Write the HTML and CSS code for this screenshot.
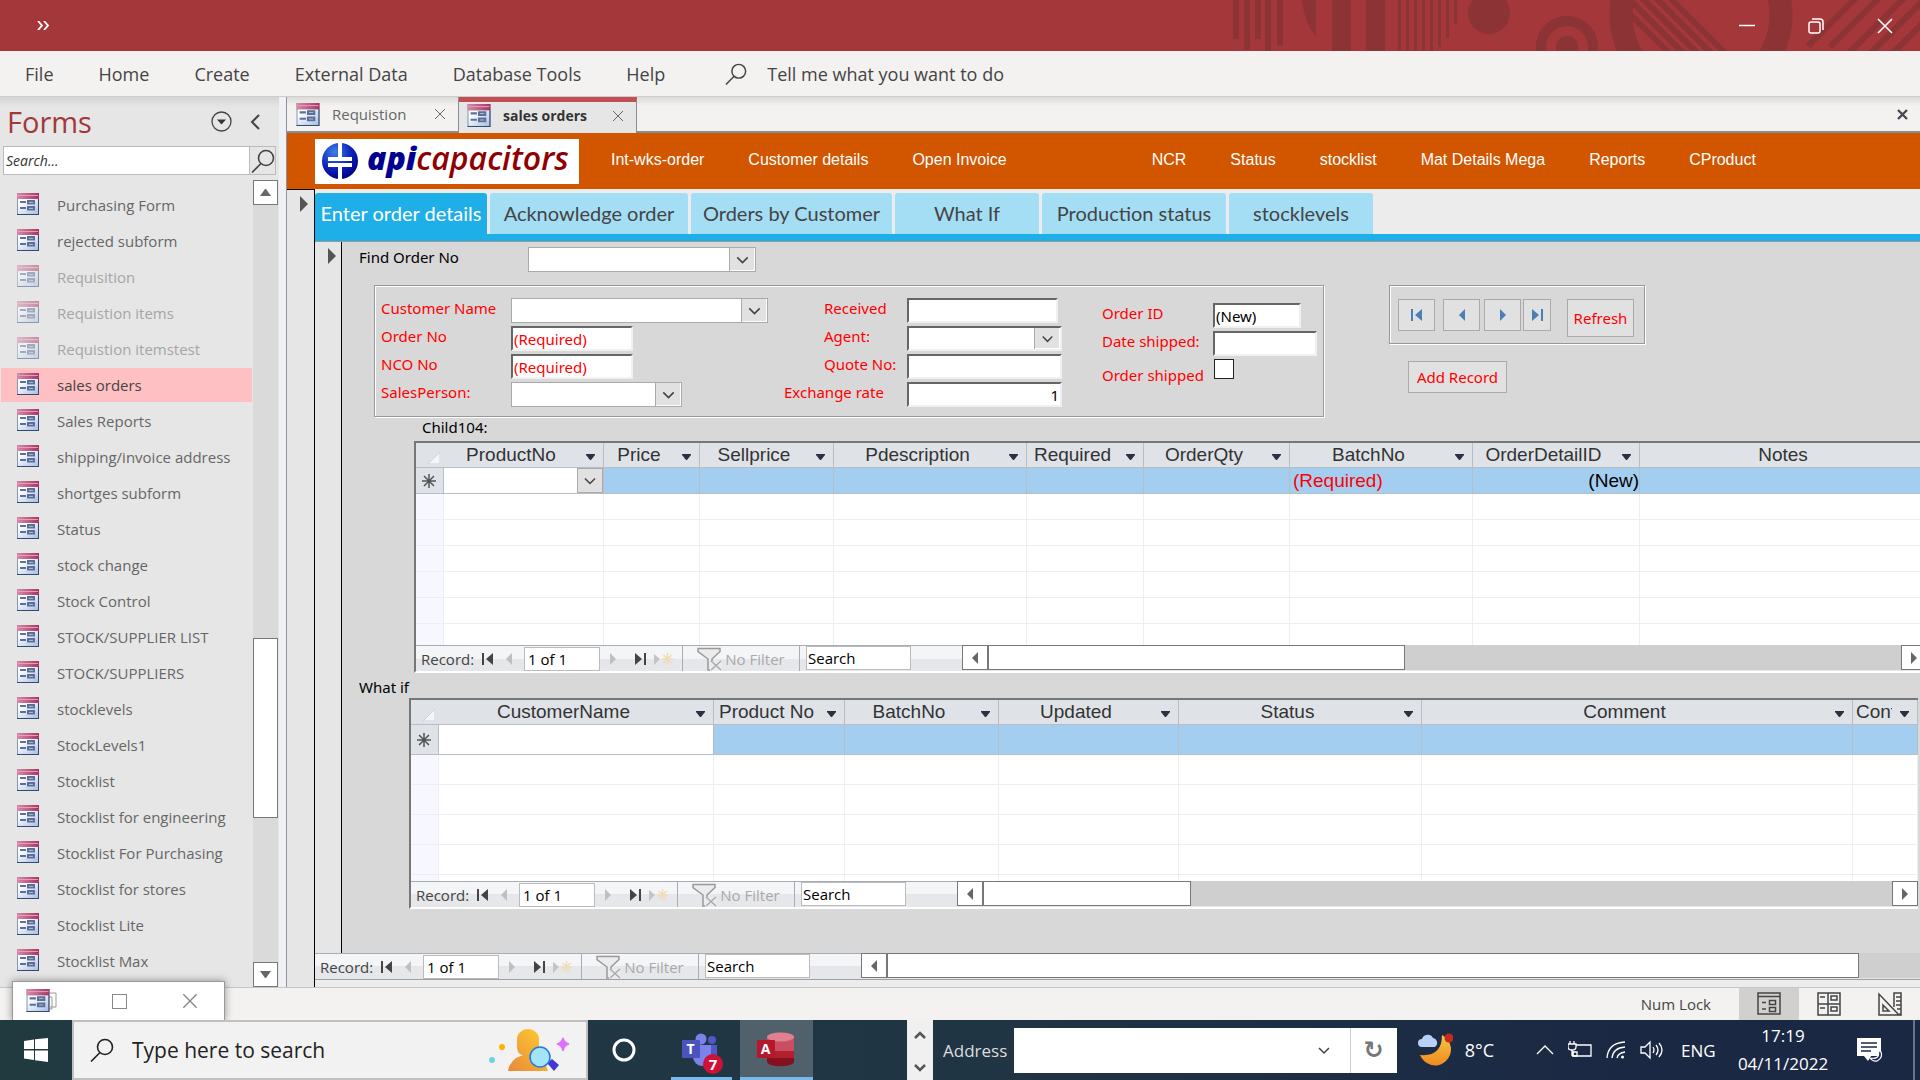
FILE: index.html
```html
<!DOCTYPE html>
<html lang="en">
<head>
  <meta charset="UTF-8">
  <meta name="viewport" content="width=device-width, initial-scale=1.0">
  <title>sales orders</title>
  <link rel="stylesheet" href="styles.css">
</head>
<body>
  <!-- Shared icons -->
  <svg class="defs" aria-hidden="true">
    <defs>
      <linearGradient id="g-head" x1="0" y1="0" x2="1" y2="0"><stop offset="0" stop-color="#d889a8"/><stop offset="1" stop-color="#a83464"/></linearGradient>
      <linearGradient id="g-body" x1="0" y1="0" x2="1" y2="1"><stop offset="0.2" stop-color="#fff"/><stop offset="1" stop-color="#a9bfe6"/></linearGradient>
      <symbol id="form" viewBox="0 0 22 22">
        <rect width="22" height="22" fill="#8496b4"/>
        <rect x="1" y="6" width="20" height="15" fill="url(#g-body)"/>
        <rect width="22" height="6" fill="url(#g-head)"/>
        <path d="M1 2.500h20" stroke="#e0a0bb"/>
        <path d="M21.500 6v16M0 21.500h22" stroke="#364a6c"/>
        <path d="M3 9h6M3 15h6" stroke="#5b7099" stroke-width="2"/>
        <path d="M11 8h6v2.500h-6zM11 14h6v2.500h-6z" fill="#fff" stroke="#5b7099" stroke-width="2"/>
      </symbol>
      <symbol id="chev" viewBox="0 0 24 22"><path d="M7 9l5 5 5-5" fill="none" stroke="#444" stroke-width="1.500"/></symbol>
      <symbol id="close" viewBox="0 0 12 12"><path d="M1 1l10 10M11 1L1 11" fill="none" stroke="currentColor"/></symbol>
      <symbol id="glass" viewBox="0 0 24 24"><circle cx="15" cy="9" r="7.500" fill="none" stroke="currentColor" stroke-width="1.600"/><path d="M10 14.500L1 23.500" stroke="currentColor" stroke-width="1.600"/></symbol>
      <symbol id="left" viewBox="0 0 6 12"><path d="M6 0v12L0 6z" fill="currentColor"/></symbol>
      <symbol id="right" viewBox="0 0 6 12"><path d="M0 0v12l6-6z" fill="currentColor"/></symbol>
      <symbol id="first" viewBox="0 0 12 12"><path d="M0 0h2v12H0zM11 0v12L4 6z" fill="currentColor"/></symbol>
      <symbol id="last" viewBox="0 0 12 12"><path d="M12 0h-2v12h2zM1 0v12l7-6z" fill="currentColor"/></symbol>
      <symbol id="new" viewBox="0 0 20 12"><path d="M0 1v11l6-6z" fill="#c4c4c4"/><path d="M13.500 0v12M8 6h11M9.500 2l8 8M17.500 2l-8 8" stroke="#f0dcb8" stroke-width="1.500"/></symbol>
      <symbol id="funnel" viewBox="0 0 25 24"><path d="M1 1.500h22v3L15 12v11h-4V12L1 4.500z" fill="#ececec" stroke="#999" stroke-width="1.500"/><path d="M13 14h12v10H13z" fill="#ebecef"/><path d="M14 14l10 9M24 14l-10 9" stroke="#aaa" stroke-width="1.500"/></symbol>
      <symbol id="drop" viewBox="0 0 9 6"><path d="M0 0h9v1L5 6H4L0 1z" fill="#2b3140"/></symbol>
      <symbol id="star" viewBox="0 0 16 16"><path d="M8 1v14M1 8h14M3 3l10 10M13 3L3 13" stroke="#555" stroke-width="1.500"/></symbol>
      <symbol id="corner" viewBox="0 0 12 12"><path d="M12 0v12H0z" fill="#f3f5f8" stroke="#c8d4e4"/></symbol>
    </defs>
  </svg>

  <header class="titlebar">
    <svg class="pattern" viewBox="0 0 720 51" aria-hidden="true">
      <defs><clipPath id="ring"><circle cx="501" cy="15" r="75"/></clipPath></defs>
      <g fill="#8b3335">
        <path d="M33 0h6v39h-6zM44 0h6v50h-6zM55 0h6v39h-6zM65 0h6v51h-6zM77 0h6v46h-6zM132 0h19v51h-19zM166 0h19v51h-19z"/>
        <path d="M102 0h14v37Q104 22 102 0z"/>
        <path d="M198 0h3v51h-3zM206 0h3v51h-3zM214 0h3v51h-3zM222 0h3v51h-3zM230 0h3v51h-3zM238 0h3v47h-3zM246 0h3v38h-3zM254 0h3v24h-3z"/>
        <circle cx="289" cy="13" r="21"/>
        <circle cx="367" cy="47" r="11"/>
      </g>
      <g fill="none" stroke="#8b3335">
        <circle cx="367" cy="47" r="26" stroke-width="10"/>
        <circle cx="501" cy="15" r="80" stroke-width="23"/>
        <path clip-path="url(#ring)" d="M400-16l80 80M414-16l80 80M428-16l80 80M442-16l80 80M456-16l80 80" stroke-width="6"/>
        <path d="M608 46L656-2M630 47L679-2M642 60l62-62M664 60l62-62M686 60l62-62" stroke-width="6"/>
      </g>
    </svg>
    <button class="qat" aria-label="More commands"><svg width="13" height="9" viewBox="0 0 13 9"><path d="M1 0l4 4.500L1 9M7 0l4 4.500L7 9" fill="none" stroke="#fff" stroke-width="1.800"/></svg></button>
    <div class="winbtns">
      <button aria-label="Minimize"><svg width="16" height="16" viewBox="0 0 16 16"><path d="M0 7.500h16" stroke="#fff" stroke-width="1.500"/></svg></button>
      <button aria-label="Restore"><svg width="16" height="16" viewBox="0 0 16 16"><rect x="1" y="4" width="11" height="11" rx="2" fill="none" stroke="#fff" stroke-width="1.500"/><path d="M4 1h8a3 3 0 0 1 3 3v8" fill="none" stroke="#fff" stroke-width="1.500"/></svg></button>
      <button aria-label="Close"><svg width="16" height="16" viewBox="0 0 16 16"><path d="M1 1l14 14M15 1L1 15" stroke="#fff" stroke-width="1.500"/></svg></button>
    </div>
  </header>

  <nav class="ribbon">
    <a href="#">File</a>
    <a href="#">Home</a>
    <a href="#">Create</a>
    <a href="#">External Data</a>
    <a href="#">Database Tools</a>
    <a href="#">Help</a>
    <label class="tellme"><svg width="22" height="22"><use href="#glass"/></svg><input type="text" value="Tell me what you want to do"></label>
  </nav>

  <div class="workspace">
    <aside class="sidebar">
      <div class="side-head">
        <h1>Forms</h1>
        <button aria-label="Filter"><svg width="21" height="21" viewBox="0 0 21 21"><circle cx="10.500" cy="10.500" r="9.500" fill="none" stroke="#444" stroke-width="1.300"/><path d="M6 8.500h9l-4.500 5z" fill="#333"/></svg></button>
        <button aria-label="Collapse"><svg width="10" height="16" viewBox="0 0 10 16"><path d="M9 1L2 8l7 7" fill="none" stroke="#444" stroke-width="2"/></svg></button>
      </div>
      <div class="side-search">
        <input type="text" placeholder="Search..." aria-label="Search forms">
        <button aria-label="Search"><svg width="24" height="24"><use href="#glass"/></svg></button>
      </div>
      <div class="side-body">
        <ul class="side-list">
          <li><a href="#"><svg><use href="#form"/></svg>Purchasing Form</a></li>
          <li><a href="#"><svg><use href="#form"/></svg>rejected subform</a></li>
          <li class="dim"><a href="#"><svg><use href="#form"/></svg>Requisition</a></li>
          <li class="dim"><a href="#"><svg><use href="#form"/></svg>Requistion items</a></li>
          <li class="dim"><a href="#"><svg><use href="#form"/></svg>Requistion itemstest</a></li>
          <li class="selected"><a href="#"><svg><use href="#form"/></svg>sales orders</a></li>
          <li><a href="#"><svg><use href="#form"/></svg>Sales Reports</a></li>
          <li><a href="#"><svg><use href="#form"/></svg>shipping/invoice address</a></li>
          <li><a href="#"><svg><use href="#form"/></svg>shortges subform</a></li>
          <li><a href="#"><svg><use href="#form"/></svg>Status</a></li>
          <li><a href="#"><svg><use href="#form"/></svg>stock change</a></li>
          <li><a href="#"><svg><use href="#form"/></svg>Stock Control</a></li>
          <li><a href="#"><svg><use href="#form"/></svg>STOCK/SUPPLIER LIST</a></li>
          <li><a href="#"><svg><use href="#form"/></svg>STOCK/SUPPLIERS</a></li>
          <li><a href="#"><svg><use href="#form"/></svg>stocklevels</a></li>
          <li><a href="#"><svg><use href="#form"/></svg>StockLevels1</a></li>
          <li><a href="#"><svg><use href="#form"/></svg>Stocklist</a></li>
          <li><a href="#"><svg><use href="#form"/></svg>Stocklist for engineering</a></li>
          <li><a href="#"><svg><use href="#form"/></svg>Stocklist For Purchasing</a></li>
          <li><a href="#"><svg><use href="#form"/></svg>Stocklist for stores</a></li>
          <li><a href="#"><svg><use href="#form"/></svg>Stocklist Lite</a></li>
          <li><a href="#"><svg><use href="#form"/></svg>Stocklist Max</a></li>
        </ul>
        <div class="vscroll">
          <button aria-label="Scroll up"><svg width="11" height="7" viewBox="0 0 11 7"><path d="M0 7h11L6 0H5z" fill="#666"/></svg></button>
          <div class="vtrack"><div class="vthumb"></div></div>
          <button aria-label="Scroll down"><svg width="11" height="7" viewBox="0 0 11 7"><path d="M0 0h11L6 7H5z" fill="#666"/></svg></button>
        </div>
      </div>
    </aside>

    <main class="document">
      <div class="doc-tabs">
        <div class="doc-tab"><svg class="form-ico"><use href="#form"/></svg><span>Requistion</span><button aria-label="Close Requistion"><svg width="12" height="12"><use href="#close"/></svg></button></div>
        <div class="doc-tab current"><svg class="form-ico"><use href="#form"/></svg><span>sales orders</span><button aria-label="Close sales orders"><svg width="12" height="12"><use href="#close"/></svg></button></div>
        <button class="close-all" aria-label="Close"><svg width="11" height="11" viewBox="0 0 11 11"><path d="M1 1l9 9M10 1l-9 9" stroke="#444a50" stroke-width="2.400"/></svg></button>
      </div>

      <div class="banner">
        <div class="logo">
          <svg width="38" height="38" viewBox="0 0 38 38" aria-hidden="true">
            <defs><radialGradient id="g-ball" cx="0.35" cy="0.25" r="0.8"><stop offset="0" stop-color="#3f7fe8"/><stop offset="0.6" stop-color="#0a20b8"/><stop offset="1" stop-color="#000080"/></radialGradient></defs>
            <circle cx="19" cy="19" r="18" fill="url(#g-ball)"/>
            <path d="M17 1h4v14h10v4H7v-4h10zM7 21h24v4H21v12h-4V25H7z" fill="#fff"/>
          </svg>
          <span class="api">api</span><span class="cap">capacitors</span>
        </div>
        <nav class="banner-links">
          <a href="#">Int-wks-order</a>
          <a href="#">Customer details</a>
          <a href="#">Open Invoice</a>
          <a href="#">NCR</a>
          <a href="#">Status</a>
          <a href="#">stocklist</a>
          <a href="#">Mat Details Mega</a>
          <a href="#">Reports</a>
          <a href="#">CProduct</a>
        </nav>
      </div>

      <div class="record">
        <div class="selector outer"><svg width="8" height="16" viewBox="0 0 8 16"><path d="M0 0v16l8-8z" fill="#555"/></svg></div>
        <div class="record-main">
          <div class="tabs" role="tablist">
            <button class="tab active" role="tab">Enter order details</button>
            <button class="tab" role="tab">Acknowledge order</button>
            <button class="tab" role="tab">Orders by Customer</button>
            <button class="tab" role="tab">What If</button>
            <button class="tab" role="tab">Production status</button>
            <button class="tab" role="tab">stocklevels</button>
          </div>

          <div class="record inner-record">
            <div class="selector"><svg width="8" height="16" viewBox="0 0 8 16"><path d="M0 0v16l8-8z" fill="#555"/></svg></div>
            <form class="order-form">
              <div class="find">
                <label for="find-order">Find Order No</label>
                <div class="combo"><select id="find-order"><option></option></select><svg><use href="#chev"/></svg></div>
              </div>

              <div class="panels">
                <div class="group">
                  <div class="fields customer">
                    <label for="customer">Customer Name</label>
                    <div class="combo"><select id="customer"><option></option></select><svg><use href="#chev"/></svg></div>
                    <label for="order-no">Order No</label>
                    <input class="sunken required" id="order-no" type="text" value="(Required)">
                    <label for="nco-no">NCO No</label>
                    <input class="sunken required" id="nco-no" type="text" value="(Required)">
                    <label for="sales-person">SalesPerson:</label>
                    <div class="combo narrow"><select id="sales-person"><option></option></select><svg><use href="#chev"/></svg></div>
                  </div>
                  <div class="fields quote">
                    <label class="indent" for="received">Received</label>
                    <input class="sunken date" id="received" type="text">
                    <label class="indent" for="agent">Agent:</label>
                    <div class="combo sunken"><select id="agent"><option></option></select><svg><use href="#chev"/></svg></div>
                    <label class="indent" for="quote-no">Quote No:</label>
                    <input class="sunken" id="quote-no" type="text">
                    <label for="rate">Exchange rate</label>
                    <input class="sunken number" id="rate" type="text" value="1">
                  </div>
                  <div class="fields shipping">
                    <label for="order-id">Order ID</label>
                    <input class="sunken short" id="order-id" type="text" value="(New)">
                    <label for="date-shipped">Date shipped:</label>
                    <input class="sunken" id="date-shipped" type="text">
                    <label for="order-shipped">Order shipped</label>
                    <input class="check" id="order-shipped" type="checkbox">
                  </div>
                </div>
                <div class="actions">
                  <div class="nav-box">
                    <button type="button" aria-label="First record"><svg width="12" height="12"><use href="#first"/></svg></button>
                    <button type="button" aria-label="Previous record"><svg width="8" height="12"><use href="#left"/></svg></button>
                    <button type="button" aria-label="Next record"><svg width="8" height="12"><use href="#right"/></svg></button>
                    <button type="button" class="slim" aria-label="Last record"><svg width="12" height="12"><use href="#last"/></svg></button>
                    <button type="button" class="refresh">Refresh</button>
                  </div>
                  <button type="button" class="add">Add Record</button>
                </div>
              </div>

              <p class="sub-label child">Child104:</p>
              <section class="sheet items">
                <table>
                  <colgroup><col><col><col><col><col><col><col><col><col><col></colgroup>
                  <thead>
                    <tr>
                      <th><svg class="corner"><use href="#corner"/></svg></th>
                      <th><div><span>ProductNo</span><svg><use href="#drop"/></svg></div></th>
                      <th><div><span>Price</span><svg><use href="#drop"/></svg></div></th>
                      <th><div><span>Sellprice</span><svg><use href="#drop"/></svg></div></th>
                      <th><div><span>Pdescription</span><svg><use href="#drop"/></svg></div></th>
                      <th><div><span>Required</span><svg><use href="#drop"/></svg></div></th>
                      <th><div><span>OrderQty</span><svg><use href="#drop"/></svg></div></th>
                      <th><div><span>BatchNo</span><svg><use href="#drop"/></svg></div></th>
                      <th><div><span>OrderDetailID</span><svg><use href="#drop"/></svg></div></th>
                      <th>Notes</th>
                    </tr>
                  </thead>
                  <tbody>
                    <tr class="new-row">
                      <td><svg class="star"><use href="#star"/></svg></td>
                      <td><div class="combo cell"><select aria-label="ProductNo"><option></option></select><svg><use href="#chev"/></svg></div></td>
                      <td></td><td></td><td></td><td></td><td></td><td class="required">(Required)</td><td class="number">(New)</td><td></td>
                    </tr>
                    <tr><td></td><td></td><td></td><td></td><td></td><td></td><td></td><td></td><td></td><td></td></tr>
                    <tr><td></td><td></td><td></td><td></td><td></td><td></td><td></td><td></td><td></td><td></td></tr>
                    <tr><td></td><td></td><td></td><td></td><td></td><td></td><td></td><td></td><td></td><td></td></tr>
                    <tr><td></td><td></td><td></td><td></td><td></td><td></td><td></td><td></td><td></td><td></td></tr>
                    <tr><td></td><td></td><td></td><td></td><td></td><td></td><td></td><td></td><td></td><td></td></tr>
                    <tr class="partial"><td></td><td></td><td></td><td></td><td></td><td></td><td></td><td></td><td></td><td></td></tr>
                  </tbody>
                </table>
                <div class="navbar">
                  <div class="nav-part">
                    <span class="rec">Record:</span>
                    <button type="button" aria-label="First"><svg width="12" height="12"><use href="#first"/></svg></button>
                    <button type="button" aria-label="Previous" class="off"><svg width="6" height="12"><use href="#left"/></svg></button>
                    <input type="text" class="pos" value="1 of 1" aria-label="Current record">
                    <button type="button" aria-label="Next" class="off"><svg width="6" height="12"><use href="#right"/></svg></button>
                    <button type="button" aria-label="Last"><svg width="12" height="12"><use href="#last"/></svg></button>
                    <button type="button" aria-label="New"><svg width="20" height="12"><use href="#new"/></svg></button>
                  </div>
                  <button type="button" class="nofilter"><svg width="25" height="24"><use href="#funnel"/></svg>No Filter</button>
                  <div class="find-part"><input type="text" value="Search" aria-label="Search records"></div>
                  <div class="hscroll"><button type="button" aria-label="Scroll left"><svg width="6" height="12"><use href="#left"/></svg></button><div class="thumb"></div><div class="track"></div><button type="button" aria-label="Scroll right"><svg width="6" height="12"><use href="#right"/></svg></button></div>
                </div>
              </section>

              <p class="sub-label">What if</p>
              <section class="sheet whatif">
                <table>
                  <colgroup><col><col><col><col><col><col><col><col></colgroup>
                  <thead>
                    <tr>
                      <th><svg class="corner"><use href="#corner"/></svg></th>
                      <th><div><span>CustomerName</span><svg><use href="#drop"/></svg></div></th>
                      <th><div><span>Product No</span><svg><use href="#drop"/></svg></div></th>
                      <th><div><span>BatchNo</span><svg><use href="#drop"/></svg></div></th>
                      <th><div><span>Updated</span><svg><use href="#drop"/></svg></div></th>
                      <th><div><span>Status</span><svg><use href="#drop"/></svg></div></th>
                      <th><div><span>Comment</span><svg><use href="#drop"/></svg></div></th>
                      <th><div><span class="clip">Conf</span><svg><use href="#drop"/></svg></div></th>
                    </tr>
                  </thead>
                  <tbody>
                    <tr class="new-row"><td><svg class="star"><use href="#star"/></svg></td><td></td><td></td><td></td><td></td><td></td><td></td><td></td></tr>
                    <tr><td></td><td></td><td></td><td></td><td></td><td></td><td></td><td></td></tr>
                    <tr><td></td><td></td><td></td><td></td><td></td><td></td><td></td><td></td></tr>
                    <tr><td></td><td></td><td></td><td></td><td></td><td></td><td></td><td></td></tr>
                    <tr><td></td><td></td><td></td><td></td><td></td><td></td><td></td><td></td></tr>
                    <tr class="partial"><td></td><td></td><td></td><td></td><td></td><td></td><td></td><td></td></tr>
                  </tbody>
                </table>
                <div class="navbar">
                  <div class="nav-part">
                    <span class="rec">Record:</span>
                    <button type="button" aria-label="First"><svg width="12" height="12"><use href="#first"/></svg></button>
                    <button type="button" aria-label="Previous" class="off"><svg width="6" height="12"><use href="#left"/></svg></button>
                    <input type="text" class="pos" value="1 of 1" aria-label="Current record">
                    <button type="button" aria-label="Next" class="off"><svg width="6" height="12"><use href="#right"/></svg></button>
                    <button type="button" aria-label="Last"><svg width="12" height="12"><use href="#last"/></svg></button>
                    <button type="button" aria-label="New"><svg width="20" height="12"><use href="#new"/></svg></button>
                  </div>
                  <button type="button" class="nofilter"><svg width="25" height="24"><use href="#funnel"/></svg>No Filter</button>
                  <div class="find-part"><input type="text" value="Search" aria-label="Search records"></div>
                  <div class="hscroll"><button type="button" aria-label="Scroll left"><svg width="6" height="12"><use href="#left"/></svg></button><div class="thumb"></div><div class="track"></div><button type="button" aria-label="Scroll right"><svg width="6" height="12"><use href="#right"/></svg></button></div>
                </div>
              </section>
            </form>
          </div>

          <div class="navbar main-nav">
            <div class="nav-part">
              <span class="rec">Record:</span>
              <button type="button" aria-label="First"><svg width="12" height="12"><use href="#first"/></svg></button>
              <button type="button" aria-label="Previous" class="off"><svg width="6" height="12"><use href="#left"/></svg></button>
              <input type="text" class="pos" value="1 of 1" aria-label="Current record">
              <button type="button" aria-label="Next" class="off"><svg width="6" height="12"><use href="#right"/></svg></button>
              <button type="button" aria-label="Last"><svg width="12" height="12"><use href="#last"/></svg></button>
              <button type="button" aria-label="New"><svg width="20" height="12"><use href="#new"/></svg></button>
            </div>
            <button type="button" class="nofilter"><svg width="25" height="24"><use href="#funnel"/></svg>No Filter</button>
            <div class="find-part"><input type="text" value="Search" aria-label="Search records"></div>
            <div class="hscroll"><button type="button" aria-label="Scroll left"><svg width="6" height="12"><use href="#left"/></svg></button><div class="thumb"></div><div class="track"></div></div>
          </div>
        </div>
      </div>
    </main>
  </div>

  <footer class="statusbar">
    <div class="mini-window">
      <svg width="31" height="24" viewBox="0 0 31 24"><path d="M20 4h10v14h-6M22 8h4v12h-6" fill="none" stroke="#999"/><use href="#form" width="24" height="23"/></svg>
      <button aria-label="Maximize window"><svg width="15" height="15" viewBox="0 0 15 15"><rect x="0.500" y="0.500" width="14" height="14" fill="none" stroke="#888"/></svg></button>
      <button aria-label="Close window"><svg width="16" height="16"><use href="#close"/></svg></button>
    </div>
    <span class="numlock">Num Lock</span>
    <button class="view on" aria-label="Form view"><svg width="24" height="24" viewBox="0 0 24 24" fill="none" stroke="#444" stroke-width="1.500"><path d="M1 1h22v21H1zM1 4.500h22M5 10.500h4M5 17h4M12.500 8.500h6v4h-6zM12.500 15.500h6v4h-6z"/></svg></button>
    <button class="view" aria-label="Layout view"><svg width="24" height="24" viewBox="0 0 24 24" fill="none" stroke="#444" stroke-width="1.500"><path d="M1 1h22v22H1zM11 1v22M1 12h22M3 5h5M3 16h5M14 4h6v4h-6zM14 15h6v4h-6z"/></svg></button>
    <button class="view" aria-label="Design view"><svg width="24" height="24" viewBox="0 0 24 24" fill="none" stroke="#444" stroke-width="1.500"><path d="M1 2v21h20zM5 13v6h6zM16 15V1h7v22l-2-1M18 5h5M18 9h5M18 13h5M19 17h4"/></svg></button>
  </footer>

  <div class="taskbar">
    <button class="start" aria-label="Start"><svg width="24" height="24" viewBox="0 0 24 24"><path d="M0 3l10-1.500V11H0zM11 1.300L24 0v11H11zM0 12.500h10V22L0 20.500zM11 12.500h13V24l-13-1.800z" fill="#fff"/></svg></button>
    <label class="task-search">
      <svg width="24" height="24"><use href="#glass"/></svg>
      <input type="text" value="Type here to search">
      <svg width="82" height="44" viewBox="0 0 82 44" aria-hidden="true">
        <defs><linearGradient id="g-man" x1="0" y1="1" x2="1" y2="0"><stop offset="0" stop-color="#e8883c"/><stop offset="1" stop-color="#ffd02c"/></linearGradient></defs>
        <circle cx="4" cy="32" r="3" fill="#6cd5e5"/><circle cx="14" cy="19" r="3" fill="#ffb000"/>
        <path d="M29 11a11 10 0 0 1 22 0v8q0 8-6 8 12 4 15 16H20q2-12 15-16-6-1-6-8z" fill="url(#g-man)"/>
        <path d="M59 35l5-4 7 6-5 6z" fill="#4338d4"/>
        <circle cx="52" cy="29" r="10" fill="#a4e4f8" stroke="#2478e0" stroke-width="1.500"/>
        <path d="M75 10q1 5 6 6-5 1-6 7-1-6-6-7 5-1 6-6z" fill="#e070ff" stroke="#e070ff" stroke-width="1.500"/>
      </svg>
    </label>
    <button class="cortana" aria-label="Cortana"><svg width="24" height="24" viewBox="0 0 24 24"><circle cx="12" cy="12" r="10" fill="none" stroke="#fff" stroke-width="3"/></svg></button>
    <button class="app teams" aria-label="Teams">
      <svg width="40" height="40" viewBox="0 0 40 40"><circle cx="19" cy="7" r="5.500" fill="#7b83eb"/><circle cx="30" cy="8" r="4" fill="#5059c9"/><path d="M27 13h8v12h-8z" fill="#5059c9"/><path d="M10 13h19v12a9 9 0 0 1-18 0z" fill="#7b83eb"/><rect y="8" width="18" height="18" rx="1" fill="#4b53bc"/></svg>
      <span class="letter">T</span><span class="badge">7</span>
    </button>
    <button class="app access" aria-label="Access">
      <svg width="40" height="40" viewBox="0 0 40 40"><path d="M10 5h27v8H10z" fill="#c94f60"/><path d="M10 12h27v8H10z" fill="#c94f60"/><path d="M10 19h27v8H10z" fill="#b02030"/><path d="M10 26h27v4a13 4 0 0 1-27 0z" fill="#851020"/><ellipse cx="23.500" cy="5" rx="13.500" ry="4.500" fill="#e08090"/><rect y="8" width="18" height="18" rx="1" fill="#b5172c"/></svg>
      <span class="letter">A</span>
    </button>
    <div class="task-scroll">
      <svg width="12" height="8" viewBox="0 0 12 8"><path d="M1 7l5-5 5 5" fill="none" stroke="#555" stroke-width="2.500"/></svg>
      <svg width="12" height="8" viewBox="0 0 12 8"><path d="M1 1l5 5 5-5" fill="none" stroke="#555" stroke-width="2.500"/></svg>
    </div>
    <label class="addr-label" for="address">Address</label>
    <div class="addr"><input type="text" id="address"><svg width="24" height="22"><use href="#chev"/></svg></div>
    <button class="reload" aria-label="Refresh">↻</button>
    <button class="weather">
      <svg width="36" height="34" viewBox="0 0 36 34" aria-hidden="true"><defs><linearGradient id="g-moon" x1="0" y1="0" x2="0" y2="1"><stop offset="0" stop-color="#f5c542"/><stop offset="1" stop-color="#f08a20"/></linearGradient></defs><path d="M25 2a16 16 0 1 1-22 20q22 2 22-20z" fill="url(#g-moon)"/><path d="M5 14a4 4 0 0 1 0-8 6 6 0 0 1 11-1 5 5 0 0 1 2 9z" fill="#b8d0f8"/><circle cx="32" cy="5" r="4.500" fill="#c42b1c"/></svg>
      8°C
    </button>
    <div class="tray">
      <svg width="18" height="10" viewBox="0 0 18 10"><path d="M1 9l8-8 8 8"/></svg>
      <svg width="24" height="20" viewBox="0 0 24 20"><path d="M8 5h15v11H5v-5M2 1v3M6 1v3M0 4h8v3q0 3-4 3t-4-3zM4 10v6"/><path d="M5 12h4v4H5z" fill="#fff"/></svg>
      <svg width="20" height="20" viewBox="0 0 20 20"><path d="M1 18Q2 3 19 2M6 18Q7 8 19 7M11 18Q12 13 19 12"/><circle cx="16.500" cy="17" r="1.500" fill="#fff"/></svg>
      <svg width="24" height="20" viewBox="0 0 24 20"><path d="M1 7h4l5-5v16l-5-5H1zM13 7q2 3 0 6M16 5q4 5 0 10M19 3q6 7 0 14"/></svg>
    </div>
    <span class="lang">ENG</span>
    <time class="clock" datetime="2022-11-04T17:19">17:19<br>04/11/2022</time>
    <button class="notes" aria-label="Notifications"><svg width="26" height="26" viewBox="0 0 26 26"><path d="M0 1h24v18H14l-3 5-4-5H0z" fill="#fff"/><path d="M4 6h16M4 10h16M4 14h10" stroke="#1b2844" stroke-width="1.500"/><path d="M21 13q3 10-8 8 3 4 7 3 6-3 4-9z" fill="#1b2844" stroke="#fff" stroke-width="1.200"/></svg></button>
    <div class="peek"></div>
  </div>
</body>
</html>
```
FILE: styles.css
```css
* {
  box-sizing: border-box;
}
body {
  margin: 0;
  min-height: 100vh;
  display: flex;
  flex-direction: column;
  font-family: "Open Sans", "Noto Sans", sans-serif;
  font-size: 15px;
  color: #444;
  background: #f3f2f1;
  overflow: hidden;
}
button,
input,
select {
  font: inherit;
  color: inherit;
  margin: 0;
  padding: 0;
  border: none;
  background: none;
  border-radius: 0;
  min-width: 0;
}
button {
  display: flex;
  align-items: center;
  justify-content: center;
}
a {
  color: inherit;
  text-decoration: none;
}
svg {
  flex: none;
}
.defs {
  position: absolute;
  width: 0;
  height: 0;
}

/* Title bar and ribbon */
.titlebar {
  display: grid;
  height: 51px;
  background: #a4373a;
}
.titlebar > * {
  grid-area: 1 / 1;
}
.pattern {
  width: 720px;
  height: 51px;
  justify-self: end;
}
.qat {
  justify-self: start;
  padding-left: 37px;
}
.winbtns {
  justify-self: end;
  display: flex;
  padding-right: 1px;
}
.winbtns button {
  width: 69px;
}
.ribbon {
  display: flex;
  align-items: center;
  gap: 45px;
  height: 46px;
  padding-left: 25px;
  font-size: 18px;
  border-bottom: 1px solid #cfcdcb;
}
.tellme {
  display: flex;
  align-items: center;
  gap: 20px;
  margin-left: 15px;
}
.tellme input {
  width: 300px;
}

.workspace {
  flex: 1;
  display: flex;
  min-height: 0;
  border-bottom: 1px solid #c6c6c6;
}

/* Navigation pane */
.sidebar {
  flex: none;
  width: 287px;
  display: flex;
  flex-direction: column;
  background: linear-gradient(#d4d4d4, #e6e6e6 10px);
  border-right: 1px solid #8f949c;
  box-shadow: inset -7px 0 #f0f1f4;
}
.side-head {
  display: flex;
  align-items: center;
  height: 49px;
  padding: 0 26px 0 7px;
}
.side-head h1 {
  flex: 1;
  margin: 0;
  font-size: 29px;
  font-weight: 400;
  color: #a4373a;
}
.side-head button + button {
  margin-left: 18px;
}
.side-search {
  display: flex;
  height: 29px;
  margin: 0 10px 5px 3px;
  border: 1px solid #bbb;
}
.side-search input {
  flex: 1;
  padding-left: 2px;
  background: #fff;
  font-style: italic;
  font-size: 14px;
}
.side-search input::placeholder {
  color: #333;
}
.side-search button {
  width: 26px;
  border-left: 1px solid #bbb;
}
.side-body {
  flex: 1;
  display: flex;
  padding-right: 8px;
}
.side-list {
  flex: 1;
  margin: 0;
  padding: 8px 1px 0;
  list-style: none;
  color: #666;
}
.side-list li {
  height: 34px;
  margin-bottom: 2px;
}
.side-list a {
  display: flex;
  align-items: center;
  gap: 18px;
  height: 34px;
  padding-left: 16px;
  white-space: nowrap;
}
.side-list svg {
  width: 22px;
  height: 22px;
  margin-bottom: 2px;
}
.side-list .dim {
  opacity: 0.5;
}
.side-list .selected {
  background: #ffc0c3;
  color: #444;
}
.vscroll {
  width: 25px;
  display: flex;
  flex-direction: column;
  background: #dadada;
}
.vscroll button {
  height: 25px;
  background: #fff;
  border: 1px solid #777;
}
.vtrack {
  flex: 1;
  display: flex;
  flex-direction: column;
  justify-content: flex-end;
  padding-bottom: 144px;
}
.vthumb {
  height: 180px;
  background: #fff;
  border: 1px solid #777;
}

/* Document area */
.document {
  flex: 1;
  min-width: 0;
  display: flex;
  flex-direction: column;
  background: #ececec;
}
.doc-tabs {
  display: flex;
  height: 36px;
  background: linear-gradient(#dcdbda, #f3f2f1 9px);
  border-bottom: 2px solid #868e96;
}
.doc-tab {
  display: flex;
  align-items: center;
  width: 172px;
  padding: 0 12px 0 9px;
  border-right: 1px solid #868e96;
  color: #666;
}
.doc-tab span {
  flex: 1;
  padding-left: 12px;
}
.doc-tab.current {
  width: 178px;
  margin-bottom: -2px;
  padding: 0 12px 4px 8px;
  background: #e6e6e6;
  border-top: 5px solid #c05055;
  color: #666;
}
.current span {
  font-size: 14px;
  font-weight: 700;
  color: #333;
}
.form-ico {
  width: 24px;
  height: 23px;
}
.close-all {
  margin-left: auto;
  padding-right: 12px;
}
.banner {
  display: flex;
  align-items: center;
  height: 56px;
  padding-left: 28px;
  background: #d25500;
}
.logo {
  display: flex;
  align-items: center;
  width: 264px;
  height: 45px;
  padding-left: 6px;
  background: #fff;
  font-size: 32px;
  font-style: italic;
  line-height: 36px;
  white-space: nowrap;
}
.logo span {
  margin-bottom: 6px;
}
.logo .api {
  margin-left: 8px;
  font-weight: 800;
  color: #000090;
}
.logo .cap {
  font-weight: 600;
  color: #900000;
}
.banner-links {
  display: flex;
  padding: 0 0 2px 32px;
  font: 16px "Liberation Sans", Arial, sans-serif;
  color: #fff;
  white-space: nowrap;
}
.banner-links a {
  margin-right: 44px;
}
.banner-links a:nth-child(3) {
  margin-right: 145px;
}

.record {
  flex: 1;
  display: flex;
  min-height: 0;
}
.selector {
  flex: none;
  width: 27px;
  padding: 6px 0 0 13px;
  background: #e6e6e6;
  border-right: 1px solid #000;
}
.selector.outer {
  width: 28px;
  border-top: 1px solid #000;
}
.record-main {
  flex: 1;
  min-width: 0;
  display: flex;
  flex-direction: column;
  padding-bottom: 7px;
}
.tabs {
  display: flex;
  gap: 3px;
  padding-top: 4px;
  height: 53px;
  border-bottom: 1px solid #999;
  background: linear-gradient(#1eaee8, #1eaee8) bottom / 100% 7px no-repeat;
}
.tab {
  height: 41px;
  padding-bottom: 2px;
  border-radius: 3px 3px 0 0;
  background: #a4def5;
  font-family: Lato, sans-serif;
  font-size: 20px;
  white-space: nowrap;
}
.tab:nth-child(1) { width: 172px; }
.tab:nth-child(2) { width: 198px; }
.tab:nth-child(3) { width: 201px; }
.tab:nth-child(4) { width: 144px; }
.tab:nth-child(5) { width: 184px; }
.tab:nth-child(6) { width: 144px; }
.tab.active {
  background: #1eaee8;
  color: #fff;
}

/* Order form */
.order-form {
  flex: 1;
  min-width: 0;
  overflow: hidden;
  background: #d8d8d8;
  font-family: "Noto Sans", sans-serif;
  color: #000;
}
.find {
  display: grid;
  grid-template-columns: 169px 228px;
  padding: 5px 0 0 17px;
  height: 43px;
}
.find label {
  line-height: 20px;
}
.combo {
  display: grid;
  width: 100%;
  height: 25px;
  background: #fff;
  border: 1px solid #aaa;
}
.combo > * {
  grid-area: 1 / 1;
}
.combo select {
  width: 100%;
  appearance: none;
}
.combo svg {
  justify-self: end;
  width: 26px;
  height: 100%;
  background: #e1e1e1;
  border-left: 1px solid #aaa;
  box-shadow: inset -1px -1px #fff;
  pointer-events: none;
}
.sunken {
  width: 100%;
  height: 25px;
  padding: 0 1px;
  background: #fff;
  border: 2px solid;
  border-color: #666 #f0f0f0 #f0f0f0 #666;
}
.combo.sunken {
  padding: 0;
}
.required {
  color: #f00;
}
.number {
  text-align: right;
}
.panels {
  display: flex;
  padding-left: 32px;
}
.group,
.nav-box {
  border: 1px solid #999;
  box-shadow: inset 1px 1px #fff, 1px 1px #fff;
}
.group {
  display: flex;
  width: 950px;
  height: 132px;
  padding: 12px 6px 0;
  color: #f00;
}
.fields {
  display: grid;
  grid-auto-rows: 25px;
  row-gap: 3px;
  align-content: start;
}
.fields label {
  line-height: 21px;
  white-space: nowrap;
}
.fields .indent {
  padding-left: 40px;
}
.customer {
  grid-template-columns: 130px 257px;
}
.customer .sunken {
  width: 122px;
}
.combo.narrow {
  width: 171px;
}
.quote {
  grid-template-columns: 123px 155px;
  margin-left: 16px;
}
.quote .date {
  width: 151px;
}
.shipping {
  grid-template-columns: 111px 104px;
  grid-template-rows: 25px 25px 32px;
  margin-left: 40px;
  padding-top: 5px;
}
.shipping label:last-of-type {
  line-height: 32px;
}
.shipping .short {
  width: 88px;
}
.shipping .sunken,
.quote .number {
  color: #000;
}
.check {
  appearance: none;
  width: 20px;
  height: 20px;
  margin-left: 1px;
  background: #fff;
  border: 1px solid #222;
}
.actions {
  padding-left: 65px;
}
.nav-box {
  display: flex;
  align-items: flex-start;
  width: 256px;
  height: 59px;
  padding: 13px 8px;
  color: #4a80b8;
}
.actions button {
  width: 37px;
  height: 32px;
  margin-right: 4px;
  background: #e1e1e1;
  border: 1px solid #aaa;
}
.actions button:first-child {
  margin-right: 8px;
}
.actions .slim {
  width: 28px;
  margin-left: -2px;
}
.actions .refresh {
  width: 67px;
  height: 38px;
  margin: 0 0 0 12px;
  color: #f00;
}
.actions .add {
  width: 99px;
  margin: 17px 0 0 19px;
  color: #f00;
}
.sub-label {
  margin: 0;
  padding-left: 17px;
  height: 25px;
  line-height: 29px;
}
.sub-label.child {
  height: 24px;
  padding-left: 80px;
  line-height: 20px;
}

/* Datasheets */
.sheet {
  border-top: 2px solid #777;
  border-left: 2px solid #777;
  border-bottom: 2px solid #fff;
}
.items {
  margin: 0 -7px 0 72px;
}
.whatif {
  margin: 0 2px 0 67px;
}
.sheet table {
  width: 100%;
  table-layout: fixed;
  border-collapse: separate;
  border-spacing: 0;
  background: #fff;
  font: 19px/22px "Liberation Sans", Arial, sans-serif;
}
.sheet th,
.sheet td {
  height: 26px;
  padding: 0;
  border-right: 1px solid #eceef2;
  border-bottom: 1px solid #eceef2;
  overflow: hidden;
  white-space: nowrap;
}
.sheet th {
  height: 25px;
  background: #dfe3e8;
  border-color: #b8bec6;
  font-weight: 400;
  color: #333;
}
.sheet th:first-child {
  border-right: none;
}
.sheet th div {
  display: flex;
  align-items: center;
}
.sheet th span {
  flex: 1;
  min-width: 0;
  padding-right: 8px;
}
.sheet th .clip {
  overflow: hidden;
  margin-right: 8px;
  padding: 0 0 0 3px;
}
.sheet th div svg {
  width: 9px;
  height: 6px;
  margin: 4px 8px 0 0;
}
.sheet .corner,
.sheet .star {
  display: block;
  width: 12px;
  height: 12px;
  margin: 6px 0 0 12px;
}
.sheet .star {
  width: 16px;
  height: 16px;
  margin: 0 0 0 5px;
}
.sheet td:first-child {
  background: #f6f7ff;
}
.sheet .new-row td {
  background: #a4cef0;
  border-color: #b8bec6;
}
.sheet .new-row td:first-child {
  background: #dfe3e8;
}
.sheet .new-row td:nth-child(2) {
  background: #fff;
}
.sheet .new-row .required {
  padding-left: 3px;
}
.combo.cell {
  border: none;
}
.combo.cell svg {
  border: 1px solid #aaa;
  box-shadow: none;
}
.items col:nth-child(1) { width: 28px; }
.items col:nth-child(2) { width: 160px; }
.items col:nth-child(3) { width: 96px; }
.items col:nth-child(4) { width: 134px; }
.items col:nth-child(5) { width: 193px; }
.items col:nth-child(6) { width: 117px; }
.items col:nth-child(7) { width: 146px; }
.items col:nth-child(8) { width: 183px; }
.items col:nth-child(9) { width: 167px; }
.items .partial td {
  height: 21px;
  border-bottom: none;
}
.whatif td {
  height: 30px;
}
.whatif .partial td {
  height: 6px;
  border-bottom: none;
}
.whatif col:nth-child(1) { width: 28px; }
.whatif col:nth-child(2) { width: 275px; }
.whatif col:nth-child(3) { width: 131px; }
.whatif col:nth-child(4) { width: 154px; }
.whatif col:nth-child(5) { width: 180px; }
.whatif col:nth-child(6) { width: 243px; }
.whatif col:nth-child(8) { width: 65px; }

/* Record navigation bars */
.navbar {
  display: flex;
  height: 26px;
  border-top: 1px solid #a8acb4;
  background: linear-gradient(#f4f5f7 50%, #e5e7ea 50%);
  font-family: "Open Sans", sans-serif;
  color: #444;
}
.main-nav {
  height: 27px;
  border-bottom: 1px solid #a0a0a0;
}
.nav-part {
  display: flex;
  align-items: center;
  width: 267px;
  padding-left: 5px;
  border-right: 1px solid #a8acb4;
}
.rec {
  width: 61px;
}
.nav-part .off {
  color: #c0c0c0;
  width: 30px;
}
.nav-part .pos {
  width: 76px;
  height: 24px;
  padding-left: 3px;
  margin-right: 2px;
  background: #fff;
  border: 1px solid #bbb;
  color: #000;
}
.nav-part .pos ~ button {
  margin-right: 8px;
}
.nav-part .pos ~ .off {
  width: 22px;
  margin-right: 10px;
}
.nofilter {
  width: 117px;
  gap: 3px;
  border-right: 1px solid #a8acb4;
  color: #aaa;
  white-space: nowrap;
}
.find-part {
  width: 162px;
  padding-left: 6px;
}
.find-part input {
  width: 105px;
  height: 24px;
  padding-left: 1px;
  background: #fff;
  border: 1px solid #bbb;
  color: #000;
}
.hscroll {
  flex: 1;
  display: flex;
  height: 25px;
  margin-top: -1px;
  background: #cfcfcf;
  color: #666;
}
.hscroll button {
  width: 26px;
  background: #fff;
  border: 1px solid #777;
}
.thumb {
  width: 417px;
  background: #fff;
  border: 1px solid #777;
}
.whatif .thumb {
  width: 208px;
}
.main-nav .thumb {
  flex: 1;
}
.track {
  flex: 1;
}
.main-nav .track {
  flex: none;
  width: 61px;
}

/* Status bar */
.statusbar {
  display: flex;
  align-items: stretch;
  height: 32px;
}
.mini-window {
  display: flex;
  align-items: center;
  width: 213px;
  height: 40px;
  margin: -7px auto 0 12px;
  padding: 0 26px 0 13px;
  justify-content: space-between;
  background: #fff;
  border: 1px solid #999;
  box-shadow: 0 0 8px rgba(0, 0, 0, 0.4);
  color: #888;
  z-index: 1;
}
.numlock {
  padding-right: 28px;
  line-height: 32px;
}
.view {
  width: 60px;
}
.view.on {
  background: #d2d0ce;
}
.view:last-child {
  width: 61px;
}

/* Windows taskbar */
.taskbar {
  position: relative;
  z-index: 2;
  display: flex;
  align-items: center;
  height: 60px;
  background: linear-gradient(90deg, #213a40, #203544 50%, #1b2844 85%);
  color: #fff;
  font-size: 18px;
  white-space: nowrap;
}
.start {
  width: 72px;
}
.task-search {
  display: flex;
  align-items: center;
  width: 516px;
  height: 60px;
  padding: 0 16px;
  gap: 18px;
  background: #f2f2f2;
  border: 2px solid #c0c0c0;
  color: #222;
  font-size: 21px;
}
.task-search input {
  flex: 1;
}
.cortana {
  width: 72px;
}
.app {
  display: grid;
  place-items: center;
  position: relative;
  height: 60px;
  border-bottom: 3px solid #76b9ed;
}
.teams {
  width: 61px;
  margin: 0 8px 0 11px;
}
.access {
  width: 73px;
  background: #50616b;
}
.app > svg {
  grid-area: 1 / 1;
  margin-top: 6px;
}
.letter {
  grid-area: 1 / 1;
  margin: 0 22px 0 0;
  font-size: 14px;
  line-height: 16px;
  font-weight: 700;
}
.badge {
  position: absolute;
  right: 9px;
  bottom: 3px;
  width: 20px;
  height: 20px;
  border-radius: 50%;
  background: #cc1236;
  font-size: 15px;
  line-height: 20px;
  font-weight: 700;
}
.task-scroll {
  display: flex;
  flex-direction: column;
  align-items: center;
  justify-content: space-between;
  width: 26px;
  height: 60px;
  margin-left: 94px;
  padding: 11px 0 8px;
  background: #f0f0f0;
}
.addr-label {
  width: 81px;
  padding-left: 10px;
  font-size: 17px;
  color: #ddd;
}
.addr {
  flex: 1;
  display: flex;
  align-items: center;
  height: 45px;
  padding-right: 14px;
  background: #fff;
}
.addr input {
  flex: 1;
  color: #000;
}
.reload {
  width: 47px;
  height: 45px;
  background: #fff;
  border-left: 1px solid #ccc;
  font: bold 24px "DejaVu Sans", sans-serif;
  color: #777;
}
.weather {
  gap: 12px;
  margin-left: 20px;
}
.tray {
  display: flex;
  align-items: center;
  gap: 14px;
  margin: 0 17px 0 42px;
}
.tray path {
  fill: none;
  stroke: #fff;
  stroke-width: 1.3;
}
.lang {
  width: 54px;
  font-size: 17px;
}
.clock {
  width: 96px;
  font-size: 17px;
  line-height: 28px;
  text-align: center;
}
.notes {
  margin: 0 30px 0 26px;
}
.peek {
  width: 7px;
  height: 60px;
  border-left: 2px solid #6c7488;
}
```
